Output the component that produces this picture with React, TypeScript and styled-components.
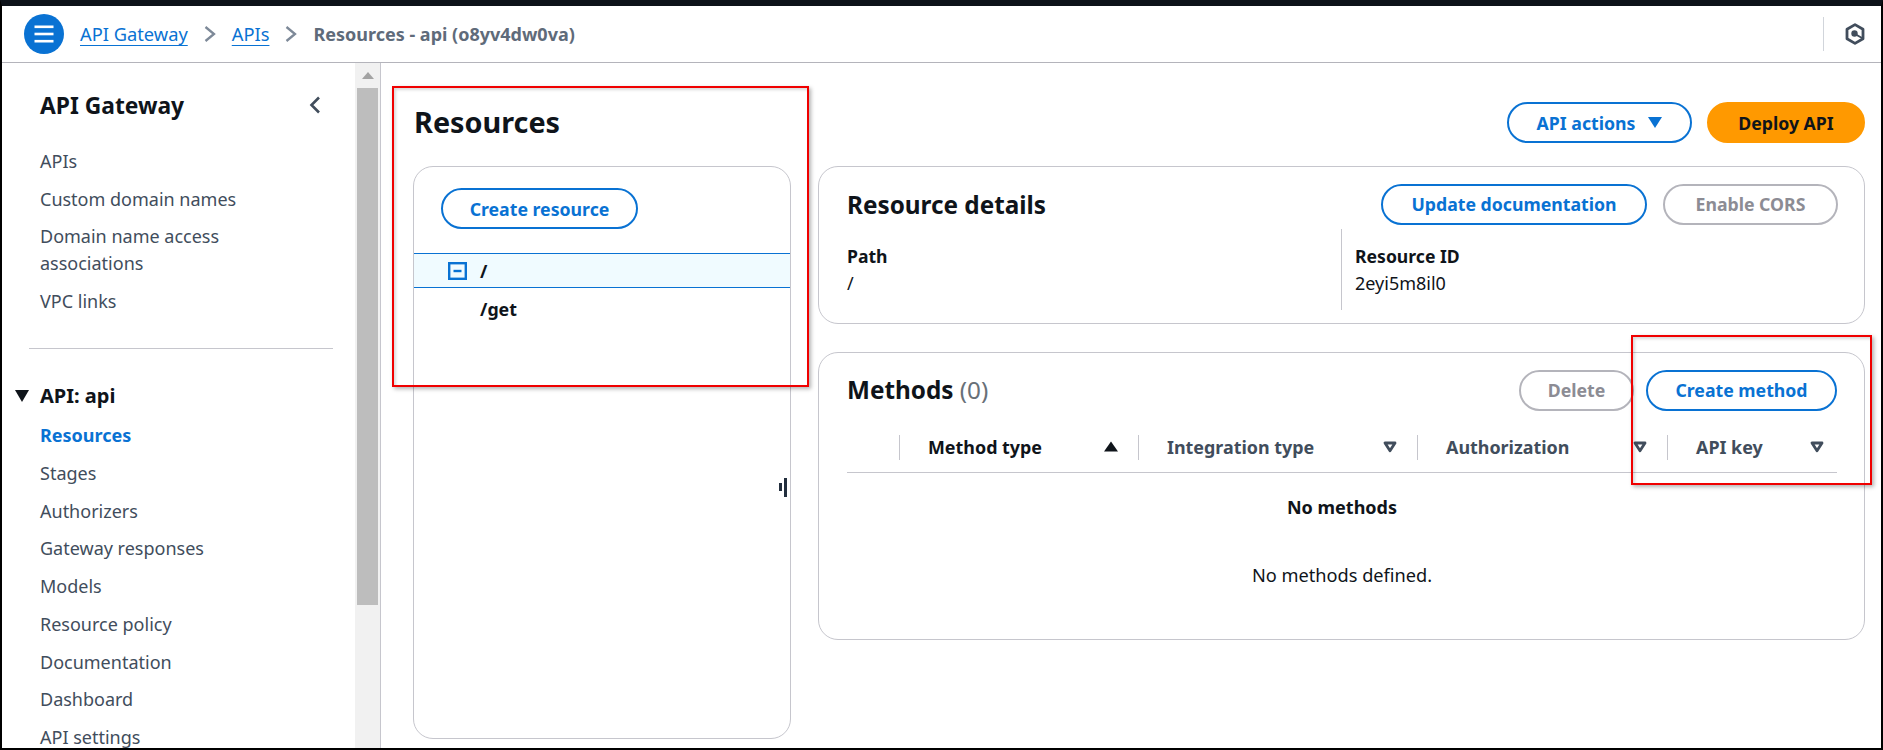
import styled, { createGlobalStyle } from 'styled-components';

const GlobalStyle = createGlobalStyle`
  html, body {
    margin: 0;
    padding: 0;
    background: #fff;
  }
  body {
    font-family: "Noto Sans", "Open Sans", sans-serif;
    color: #0f141a;
  }
  * {
    box-sizing: border-box;
  }
`;

const Frame = styled.div`
  position: relative;
  width: 1883px;
  height: 750px;
  overflow: hidden;
  background: #fff;
  border-style: solid;
  border-color: #000;
  border-width: 0 2px 2px 2px;
  border-top: 6px solid #0d1219;
  display: flex;
  flex-direction: column;
`;

const TopBar = styled.header`
  height: 57px;
  flex: none;
  display: flex;
  align-items: center;
  padding: 0 16px 1px 22px;
  border-bottom: 1px solid #b4b4bb;
`;

const MenuButton = styled.span`
  width: 40px;
  height: 40px;
  border-radius: 50%;
  background: #0972d3;
  display: flex;
  align-items: center;
  justify-content: center;
  margin-right: 16px;
  flex: none;
`;

const Crumbs = styled.nav`
  display: flex;
  align-items: center;
  font-size: 18.3px;
`;

const CrumbLink = styled.a`
  color: #0972d3;
  text-decoration: underline;
  text-underline-offset: 4px;
`;

const CrumbSeparator = styled.span`
  display: flex;
  margin: 0 16px;
  color: #7d8998;
`;

const CrumbCurrent = styled.span`
  color: #5f6b7a;
  font-weight: 700;
  font-size: 18px;
`;

const TopBarRight = styled.div`
  margin-left: auto;
  display: flex;
  align-items: center;
  gap: 21px;
  height: 34px;
  padding-left: 21px;
  border-left: 1px solid #d1d5db;
`;

const Body = styled.div`
  flex: 1;
  min-height: 0;
  display: flex;
`;

const Side = styled.aside`
  width: 353px;
  flex: none;
  padding: 27px 0 0 27px;
  overflow: hidden;
`;

const SideHead = styled.div`
  display: flex;
  align-items: center;
  justify-content: space-between;
  height: 30px;
  padding: 0 12px 0 11px;
  width: 304px;
  font-size: 22.8px;
  font-weight: 700;
`;

const SideList = styled.ul<{ $top?: number; $gap: number; $line: number }>`
  list-style: none;
  margin: ${(p) => p.$top ?? 0}px 0 0;
  padding: 0 30px 0 11px;
  width: 304px;
  display: flex;
  flex-direction: column;
  gap: ${(p) => p.$gap}px;
  line-height: ${(p) => p.$line}px;
`;

const SideItem = styled.li<{ $active?: boolean }>`
  font-size: 18px;
  color: ${(p) => (p.$active ? '#0972d3' : '#414d5c')};
  font-weight: ${(p) => (p.$active ? 700 : 400)};
`;

const SideDivider = styled.hr`
  width: 304px;
  border: 0;
  border-top: 1px solid #c6c6cd;
  margin: 33px 0 33px;
`;

const SectionLabel = styled.div`
  position: relative;
  font-size: 20px;
  line-height: 28px;
  font-weight: 700;
  padding-left: 11px;
  margin-bottom: 14px;
`;

const SectionCaret = styled.svg`
  position: absolute;
  left: -14px;
  top: 8px;
`;

const ScrollTrack = styled.div`
  width: 26px;
  flex: none;
  background: #f1f1f1;
  border-right: 1px solid #c6c6cd;
  padding-left: 2px;
  padding-right: 1px;
`;

const ScrollArrow = styled.div`
  height: 25px;
  display: flex;
  align-items: center;
  justify-content: center;
`;

const ScrollThumb = styled.div`
  width: 21px;
  height: 517px;
  background: #bdbdbd;
`;

const Main = styled.main`
  flex: 1;
  min-width: 0;
  display: grid;
  grid-template-columns: 378px 1047px;
  grid-template-rows: 41px auto;
  column-gap: 27px;
  row-gap: 23px;
  align-content: start;
  padding: 39px 0 0 32px;
`;

const PageTitle = styled.h1`
  margin: -1px 0 0 1px;
  font-size: 28.8px;
  line-height: 41px;
  font-weight: 700;
`;

const PageActions = styled.div`
  display: flex;
  justify-content: flex-end;
  gap: 15px;
`;

const Pill = styled.button<{ $variant?: 'normal' | 'primary' | 'disabled'; $width: number }>`
  height: 41px;
  width: ${(p) => p.$width}px;
  padding: 0;
  border-radius: 21px;
  font-family: inherit;
  font-size: 17.7px;
  font-weight: 700;
  display: inline-flex;
  align-items: center;
  justify-content: center;
  gap: 13px;
  flex: none;
  background: ${(p) => (p.$variant === 'primary' ? '#ff9900' : '#fff')};
  color: ${(p) =>
    p.$variant === 'primary' ? '#0f141a' : p.$variant === 'disabled' ? '#8c8c94' : '#0972d3'};
  border: 2px solid
    ${(p) =>
      p.$variant === 'primary' ? '#ff9900' : p.$variant === 'disabled' ? '#b4b4bb' : '#0972d3'};
`;

const Card = styled.section`
  border: 1px solid #c6c6cd;
  border-radius: 20px;
  background: #fff;
`;

const TreeCard = styled(Card)`
  height: 573px;
  padding-top: 21px;
`;

const TreeAction = styled.div`
  padding-left: 27px;
  margin-bottom: 24px;
`;

const TreeRow = styled.div<{ $selected?: boolean }>`
  display: flex;
  align-items: center;
  font-size: 17.8px;
  font-weight: 700;
  height: ${(p) => (p.$selected ? '35px' : '41px')};
  padding-left: ${(p) => (p.$selected ? '34px' : '66px')};
  background: ${(p) => (p.$selected ? '#f0fbff' : 'transparent')};
  border-top: ${(p) => (p.$selected ? '1px solid #0972d3' : '0')};
  border-bottom: ${(p) => (p.$selected ? '1px solid #0972d3' : '0')};
  gap: 13px;
`;

const RightStack = styled.div`
  display: flex;
  flex-direction: column;
  gap: 28px;
`;

const DetailsCard = styled(Card)`
  height: 158px;
  padding: 16px 26px 0 28px;
`;

const MethodsCard = styled(Card)`
  height: 288px;
  padding: 16px 27px 0 28px;
`;

const CardHead = styled.div`
  display: flex;
  align-items: center;
  justify-content: space-between;
  height: 42px;
`;

const CardTitle = styled.h2`
  margin: 0;
  font-size: 24.3px;
  font-weight: 700;
`;

const MethodsTitle = styled(CardTitle)`
  margin-top: -2px;
`;

const Count = styled.span`
  font-weight: 400;
  color: #687078;
`;

const ButtonRow = styled.div<{ $gap: number }>`
  display: flex;
  gap: ${(p) => p.$gap}px;
`;

const DetailGrid = styled.div`
  display: grid;
  grid-template-columns: 494px 1fr;
  height: 81px;
  margin-top: 4px;
`;

const DetailCell = styled.div<{ $divided?: boolean }>`
  padding: 14px 0 0 ${(p) => (p.$divided ? '13px' : '0')};
  border-left: ${(p) => (p.$divided ? '1px solid #c6c6cd' : '0')};
  font-size: 18px;
  line-height: 27px;
`;

const DetailLabel = styled.div`
  font-weight: 700;
  font-size: 17.6px;
`;

const TableHead = styled.div`
  display: grid;
  grid-template-columns: 52px 239px 279px 250px 169px;
  margin-top: 24px;
  padding-bottom: 12px;
  border-bottom: 1px solid #c6c6cd;
`;

const HeadCell = styled.div<{ $sorted?: boolean }>`
  height: 25px;
  display: flex;
  align-items: center;
  justify-content: space-between;
  padding: 0 20px 2px 28px;
  border-left: 1px solid #c6c6cd;
  font-size: 17.9px;
  font-weight: 700;
  color: ${(p) => (p.$sorted ? '#0f141a' : '#414d5c')};
  &:first-child {
    border-left: 0;
  }
  &:last-child {
    padding-right: 12px;
  }
`;

const EmptyState = styled.div`
  display: flex;
  flex-direction: column;
  align-items: center;
  gap: 41px;
  margin-top: 21px;
  font-size: 18.2px;
  line-height: 27px;
`;

const EmptyTitle = styled.div`
  font-weight: 700;
  font-size: 18px;
`;

const Annotation = styled.div<{ $left: number; $top: number; $w: number; $h: number }>`
  position: absolute;
  left: ${(p) => p.$left}px;
  top: ${(p) => p.$top}px;
  width: ${(p) => p.$w}px;
  height: ${(p) => p.$h}px;
  border: 2px solid #f00000;
  box-shadow: 2px 2px 4px rgba(0, 0, 0, 0.3), inset 2px 2px 3px rgba(0, 0, 0, 0.15);
  pointer-events: none;
`;

const ResizeGrip = styled.svg`
  position: absolute;
  left: 777px;
  top: 472px;
`;

const Chevron = () => (
  <svg width="12" height="16" viewBox="0 0 12 16" fill="none" stroke="currentColor" strokeWidth="2.3">
    <path d="M1.5 1l8.5 7-8.5 7" />
  </svg>
);

const SortDown = () => (
  <svg width="14" height="12" viewBox="0 0 14 12" fill="none" stroke="#414d5c" strokeWidth="2.8">
    <path d="M2 2h10L7 9.8z" strokeLinejoin="round" />
  </svg>
);

const SortUp = () => (
  <svg width="14" height="11" viewBox="0 0 14 11" fill="#0f141a">
    <path d="M7 0.5l7 10H0z" />
  </svg>
);

const columns = [
  { label: '', sorted: false },
  { label: 'Method type', sorted: true },
  { label: 'Integration type', sorted: false },
  { label: 'Authorization', sorted: false },
  { label: 'API key', sorted: false },
];

const topLinks = ['APIs', 'Custom domain names', 'Domain name access associations', 'VPC links'];
const apiLinks = [
  'Resources',
  'Stages',
  'Authorizers',
  'Gateway responses',
  'Models',
  'Resource policy',
  'Documentation',
  'Dashboard',
  'API settings',
];

export default function App() {
  return (
    <>
      <GlobalStyle />
      <Frame>
        <TopBar>
          <MenuButton>
            <svg width="20" height="18" viewBox="0 0 20 18" fill="#fff">
              <rect x="0.5" y="0.5" width="19" height="2.6" />
              <rect x="0.5" y="7.7" width="19" height="2.6" />
              <rect x="0.5" y="14.9" width="19" height="2.6" />
            </svg>
          </MenuButton>
          <Crumbs>
            <CrumbLink>API Gateway</CrumbLink>
            <CrumbSeparator>
              <Chevron />
            </CrumbSeparator>
            <CrumbLink>APIs</CrumbLink>
            <CrumbSeparator>
              <Chevron />
            </CrumbSeparator>
            <CrumbCurrent>Resources - api (o8yv4dw0va)</CrumbCurrent>
          </Crumbs>
          <TopBarRight>
            <svg width="20" height="22" viewBox="0 0 20 22" fill="none" stroke="#414d5c" strokeWidth="2.8">
              <path d="M10 1.6l8 4.6v9.6l-8 4.6-8-4.6V6.2z" strokeLinejoin="round" />
              <circle cx="9.5" cy="10.5" r="3.2" fill="#414d5c" stroke="none" />
              <path d="M10 11l7 4" strokeWidth="2" />
            </svg>
          </TopBarRight>
        </TopBar>
        <Body>
          <Side>
            <SideHead>
              API Gateway
              <svg width="12" height="18" viewBox="0 0 12 18" fill="none" stroke="#414d5c" strokeWidth="2.6">
                <path d="M10 1.5L2.5 9l7.5 7.5" />
              </svg>
            </SideHead>
            <SideList $top={28} $gap={10.7} $line={27}>
              {topLinks.map((item) => (
                <SideItem key={item}>{item}</SideItem>
              ))}
            </SideList>
            <SideDivider />
            <SectionLabel>
              <SectionCaret width="14" height="12" viewBox="0 0 14 12" fill="#0f141a">
                <path d="M0 0h14L7 12z" />
              </SectionCaret>
              API: api
            </SectionLabel>
            <SideList $gap={15.75} $line={22}>
              {apiLinks.map((item, i) => (
                <SideItem key={item} $active={i === 0}>
                  {item}
                </SideItem>
              ))}
            </SideList>
          </Side>
          <ScrollTrack>
            <ScrollArrow>
              <svg width="12" height="7" viewBox="0 0 12 7" fill="#a3a3a3">
                <path d="M6 0l6 7H0z" />
              </svg>
            </ScrollArrow>
            <ScrollThumb />
          </ScrollTrack>
          <Main>
            <PageTitle>Resources</PageTitle>
            <PageActions>
              <Pill $width={185}>
                API actions
                <svg width="14" height="11" viewBox="0 0 14 11" fill="#0972d3">
                  <path d="M0 0h14L7 11z" />
                </svg>
              </Pill>
              <Pill $variant="primary" $width={158}>
                Deploy API
              </Pill>
            </PageActions>
            <TreeCard>
              <TreeAction>
                <Pill $width={197}>Create resource</Pill>
              </TreeAction>
              <TreeRow $selected>
                <svg width="19" height="18" viewBox="0 0 19 18" fill="none" stroke="#0972d3" strokeWidth="2.4">
                  <rect x="1.2" y="1.2" width="16.6" height="15.6" />
                  <path d="M5.5 9h8" />
                </svg>
                /
              </TreeRow>
              <TreeRow>/get</TreeRow>
            </TreeCard>
            <RightStack>
              <DetailsCard>
                <CardHead>
                  <CardTitle>Resource details</CardTitle>
                  <ButtonRow $gap={16}>
                    <Pill $width={266}>Update documentation</Pill>
                    <Pill $variant="disabled" $width={175}>
                      Enable CORS
                    </Pill>
                  </ButtonRow>
                </CardHead>
                <DetailGrid>
                  <DetailCell>
                    <DetailLabel>Path</DetailLabel>/
                  </DetailCell>
                  <DetailCell $divided>
                    <DetailLabel>Resource ID</DetailLabel>2eyi5m8il0
                  </DetailCell>
                </DetailGrid>
              </DetailsCard>
              <MethodsCard>
                <CardHead>
                  <MethodsTitle>
                    Methods <Count>(0)</Count>
                  </MethodsTitle>
                  <ButtonRow $gap={12}>
                    <Pill $variant="disabled" $width={115}>
                      Delete
                    </Pill>
                    <Pill $width={191}>Create method</Pill>
                  </ButtonRow>
                </CardHead>
                <TableHead>
                  {columns.map((col, i) => (
                    <HeadCell key={i} $sorted={col.sorted}>
                      {col.label}
                      {i > 0 && (col.sorted ? <SortUp /> : <SortDown />)}
                    </HeadCell>
                  ))}
                </TableHead>
                <EmptyState>
                  <EmptyTitle>No methods</EmptyTitle>
                  <div>No methods defined.</div>
                </EmptyState>
              </MethodsCard>
            </RightStack>
          </Main>
        </Body>
        <Annotation $left={390} $top={80} $w={417} $h={301} />
        <Annotation $left={1629} $top={329} $w={241} $h={150} />
        <ResizeGrip width="8" height="19" viewBox="0 0 8 19" fill="#232f3e">
          <rect x="0" y="5" width="3" height="8" />
          <rect x="5" y="0" width="3" height="19" />
        </ResizeGrip>
      </Frame>
    </>
  );
}
